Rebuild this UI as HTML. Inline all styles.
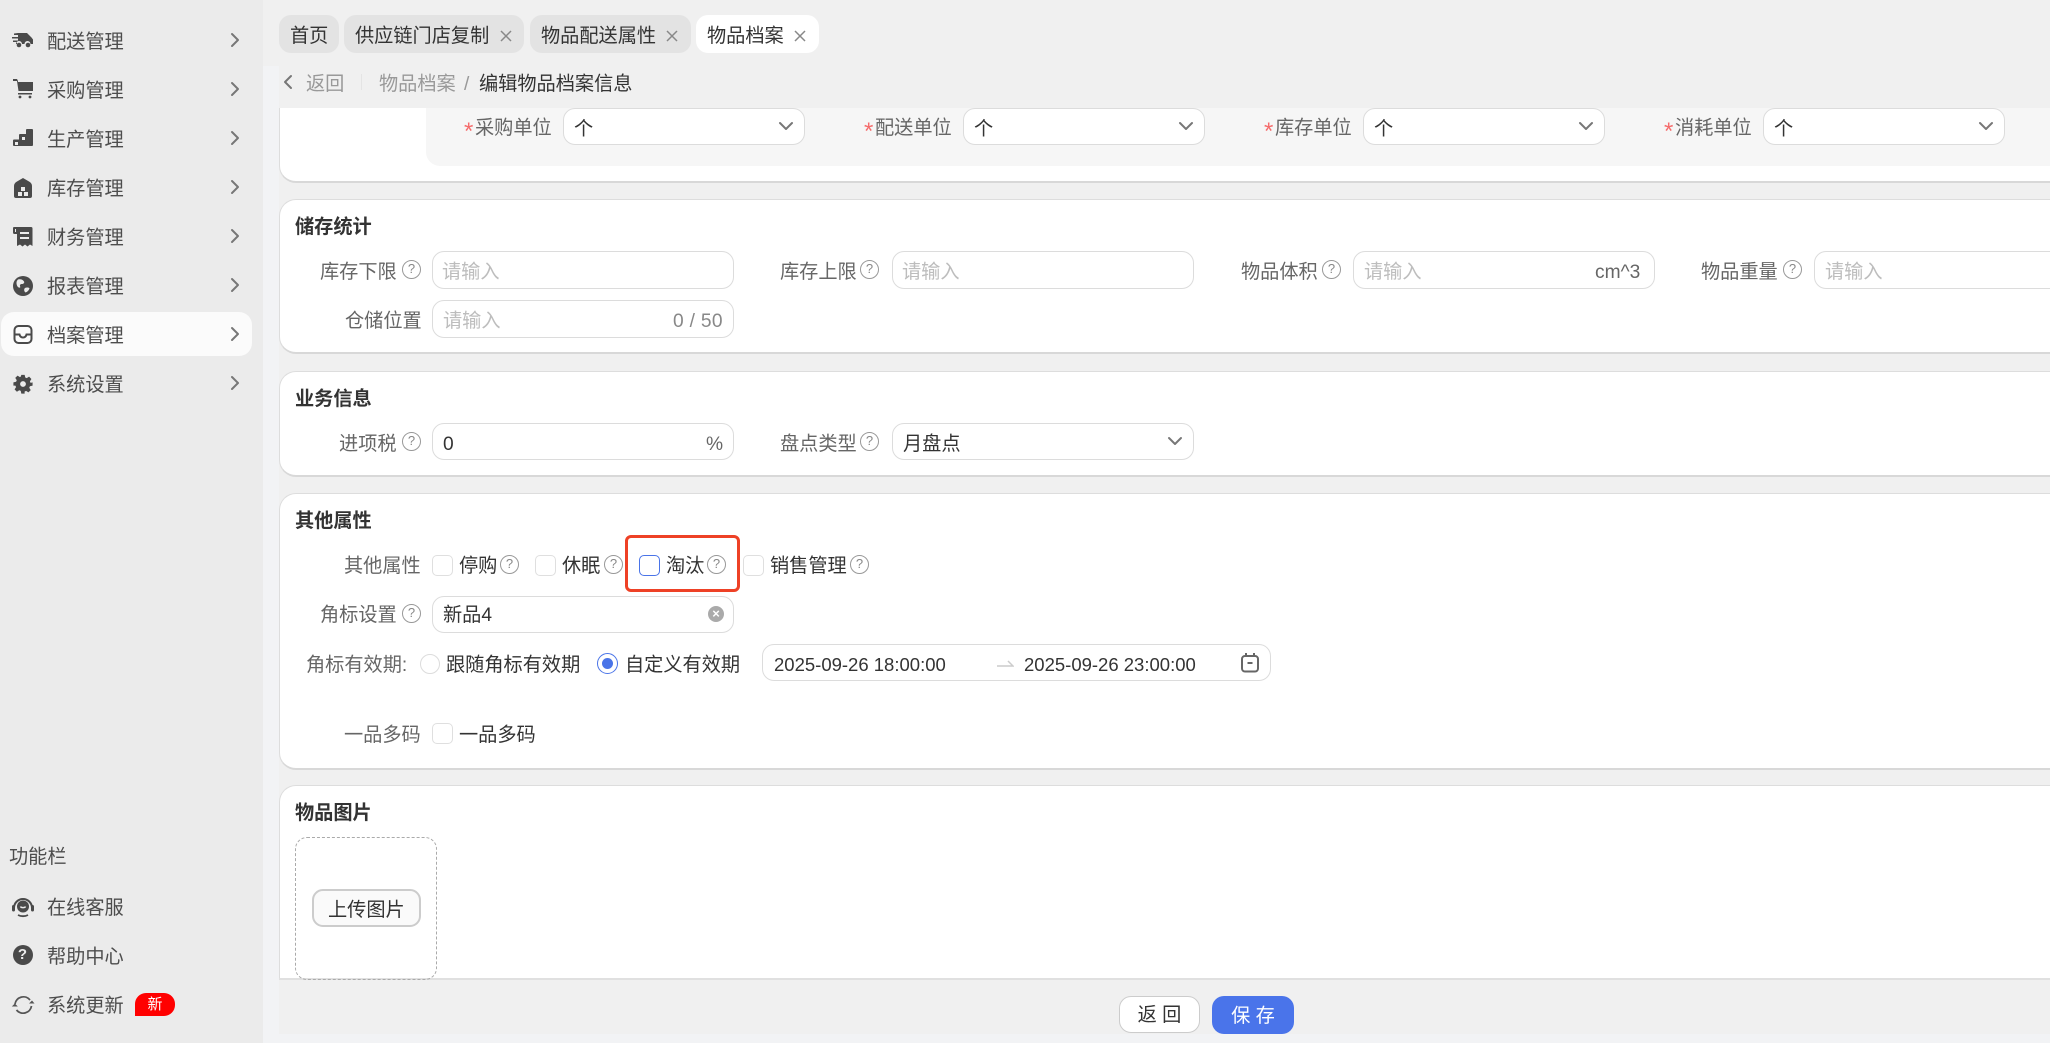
<!DOCTYPE html>
<html lang="zh-CN"><head><meta charset="utf-8"><title>物品档案</title>
<style>
html,body{margin:0;padding:0;width:2050px;height:1043px;overflow:hidden;background:#f2f3f5}
body{position:relative;font-family:"Liberation Sans","Noto Sans CJK SC",sans-serif;color:#333}
div,span,svg{position:absolute;box-sizing:border-box}
.t{white-space:nowrap;font-size:19.2px;line-height:26px;height:26px;color:#333;margin-top:2px}
.d{font-size:18.5px;margin-top:1px}
.g{color:#666}.m{color:#4d4d4d}.ph{color:#bdbdbd}
.b{font-weight:700;color:#333}
.star{font-size:24px;color:#f56c6c}
.card{left:279px;width:1900px;background:#fff;border:1px solid #ddd;border-bottom:2px solid #d8d8d8;border-radius:17px}
.in{background:#fff;border:1.5px solid #dcdcdc;border-radius:12px}
.cb{width:21px;height:21px;background:#fff;border:1.5px solid #dfdfdf;border-radius:5px}
.h{width:19px;height:19px;border:1.5px solid #999;border-radius:50%;color:#888;font-size:13px;line-height:16px;text-align:center}
.tab{top:15px;height:38px;background:#e3e3e3;border-radius:12px}
.st{fill:none;stroke:#777;stroke-width:2;stroke-linecap:round;stroke-linejoin:round}
</style></head><body>

<!-- backgrounds -->
<div style="left:0;top:0;width:263px;height:1043px;background:#ebebeb"></div>
<div style="left:263px;top:0;width:1787px;height:66px;background:#f0f0f0"></div>
<div style="left:279px;top:66px;width:1771px;height:968px;background:#f0f0f0"></div>

<!-- sidebar active -->
<div style="left:1px;top:312px;width:251px;height:44px;background:#fbfbfb;border-radius:13px"></div>

<!-- sidebar menu text -->
<span class="t m" style="left:47px;top:28px">配送管理</span>
<span class="t m" style="left:47px;top:77px">采购管理</span>
<span class="t m" style="left:47px;top:126px">生产管理</span>
<span class="t m" style="left:47px;top:175px">库存管理</span>
<span class="t m" style="left:47px;top:224px">财务管理</span>
<span class="t m" style="left:47px;top:273px">报表管理</span>
<span class="t m" style="left:47px;top:322px">档案管理</span>
<span class="t m" style="left:47px;top:371px">系统设置</span>

<!-- sidebar chevrons -->
<svg style="left:229px;top:32px" width="12" height="16" viewBox="0 0 12 16"><path class="st" d="M3 2l6 6-6 6"/></svg>
<svg style="left:229px;top:81px" width="12" height="16" viewBox="0 0 12 16"><path class="st" d="M3 2l6 6-6 6"/></svg>
<svg style="left:229px;top:130px" width="12" height="16" viewBox="0 0 12 16"><path class="st" d="M3 2l6 6-6 6"/></svg>
<svg style="left:229px;top:179px" width="12" height="16" viewBox="0 0 12 16"><path class="st" d="M3 2l6 6-6 6"/></svg>
<svg style="left:229px;top:228px" width="12" height="16" viewBox="0 0 12 16"><path class="st" d="M3 2l6 6-6 6"/></svg>
<svg style="left:229px;top:277px" width="12" height="16" viewBox="0 0 12 16"><path class="st" d="M3 2l6 6-6 6"/></svg>
<svg style="left:229px;top:326px" width="12" height="16" viewBox="0 0 12 16"><path class="st" d="M3 2l6 6-6 6"/></svg>
<svg style="left:229px;top:375px" width="12" height="16" viewBox="0 0 12 16"><path class="st" d="M3 2l6 6-6 6"/></svg>

<!-- sidebar icons -->
<svg style="left:12px;top:30px" width="22" height="20" viewBox="0 0 22 20" fill="#4a4a4a"><path d="M6 3h9l4.500 4.500 1.500 2V14h-2.500a3 3 0 0 0-6 0H10a3 3 0 0 0-6 0H5V12H1V10.500h5V8.500H0V7h6V5H2V3.500z"/><circle cx="7" cy="15" r="2.300"/><circle cx="16" cy="15" r="2.300"/></svg>
<svg style="left:12px;top:78px" width="22" height="22" viewBox="0 0 22 22" fill="#4a4a4a"><path d="M1 1h4l1 2v1h15v9H6.500L5 3H1z"/><path d="M6 15h14v1.500H6z"/><circle cx="8" cy="19" r="1.400"/><circle cx="18" cy="19" r="1.400"/></svg>
<svg style="left:12px;top:128px" width="22" height="20" viewBox="0 0 22 20" fill="#4a4a4a"><path d="M15 1h5a1 1 0 0 1 1 1v15a1 1 0 0 1-1 1H2a1 1 0 0 1-1-1v-4.500a1 1 0 0 1 1-1h5V7a1 1 0 0 1 1-1h6V2a1 1 0 0 1 1-1z"/><path d="M3 14h3v3H3zM10 9h3v3h-3z" fill="#ebebeb"/></svg>
<svg style="left:12px;top:177px" width="22" height="22" viewBox="0 0 22 22" fill="#4a4a4a"><path d="M11 1l6 3.500c2 1.200 3 2.500 3 4.500v10a2 2 0 0 1-2 2H4a2 2 0 0 1-2-2V9c0-2 1-3.300 3-4.500z"/><path d="M9 10h4v4H9zM6 15h4v4H6zM12 15h4v4h-4z" fill="#ebebeb"/></svg>
<svg style="left:12px;top:226px" width="22" height="22" viewBox="0 0 22 22" fill="#4a4a4a"><path d="M2 1h17a1.500 1.500 0 0 1 1.500 1.500V20l-2.500-1.500-2.500 2-2.500-2-2.500 2-2.500-2L5 20V8H2.500A1.500 1.500 0 0 1 1 6.500V2a1 1 0 0 1 1-1z"/><path d="M8 6h9v2H8zM8 11h9v2H8z" fill="#ebebeb"/><path d="M3 3v3h1V3z" fill="#ebebeb"/></svg>
<svg style="left:12px;top:275px" width="22" height="22" viewBox="0 0 22 22"><circle cx="11" cy="11" r="10" fill="#4a4a4a"/><path d="M6 4.500c3-.8 5 .4 6 2 .7 1.300-.4 2.500-2 2.500s-2.600 1-1.800 2.600c.5 1-1 1.500-2.200.4C4.500 10.500 3.600 6.500 6 4.500zM13 13c1.500-.8 3.500-.5 4.500.2-.5 2-2 3.500-4 4.300-1.500-1-1.800-3.500-.5-4.500z" fill="#ebebeb"/></svg>
<svg style="left:13px;top:324px" width="20" height="22" viewBox="0 0 20 22" fill="none" stroke="#4a4a4a" stroke-width="2"><rect x="1.500" y="2" width="17" height="17" rx="4"/><path d="M1.500 10.500h5c.5 2 1.800 3 3.500 3s3-1 3.500-3h5"/></svg>
<svg style="left:13px;top:374px" width="20" height="20" viewBox="0 0 24 24" fill="#4a4a4a"><path fill-rule="evenodd" d="M10 1h4l.7 3.200 1.800.8 2.800-1.800 2.800 2.800-1.800 2.800.8 1.800L23.500 10v4l-3.200.7-.8 1.800 1.800 2.800-2.800 2.800-2.800-1.800-1.800.8L14 23.500h-4l-.7-3.200-1.800-.8-2.800 1.800-2.800-2.800 1.800-2.800-.8-1.800L.5 14v-4l3.200-.7.8-1.800L2.700 4.700l2.800-2.800 2.800 1.800 1-.5zM12 8.500a3.500 3.500 0 1 0 0 7 3.500 3.500 0 0 0 0-7z"/></svg>

<!-- sidebar bottom -->
<span class="t m" style="left:9px;top:843px">功能栏</span>
<span class="t m" style="left:47px;top:894px">在线客服</span>
<span class="t m" style="left:47px;top:943px">帮助中心</span>
<span class="t m" style="left:47px;top:992px">系统更新</span>
<svg style="left:11px;top:896px" width="24" height="22" viewBox="0 0 24 22"><path d="M3 12a9 9 0 1 1 18 0" fill="none" stroke="#4a4a4a" stroke-width="2"/><circle cx="12" cy="10.500" r="6" fill="#4a4a4a"/><path d="M9.500 10.500c.6 1.500 4.400 1.500 5 0" fill="none" stroke="#ebebeb" stroke-width="1.500"/><rect x="1" y="9" width="3" height="6.500" rx="1.500" fill="#4a4a4a"/><rect x="20" y="9" width="3" height="6.500" rx="1.500" fill="#4a4a4a"/><path d="M7 19c3 1.600 7 1.600 10 0" fill="none" stroke="#4a4a4a" stroke-width="1.800"/></svg>
<div style="left:12.500px;top:945px;width:20px;height:20px;border-radius:50%;background:#4a4a4a;color:#ebebeb;font-size:15px;font-weight:700;line-height:20px;text-align:center">?</div>
<svg style="left:11px;top:994px" width="24" height="22" viewBox="0 0 24 22" fill="none" stroke="#555" stroke-width="1.800"><path d="M4 10a8.500 8.500 0 0 1 15-4"/><path d="M20.500 12a8.500 8.500 0 0 1-15 4"/><path d="M18 9.500l3-3 2.500 3" fill="#555" stroke="none"/><path d="M0.800 12.500l3-3 3 3" fill="#555" stroke="none"/></svg>
<div style="left:135px;top:993px;width:40px;height:23px;background:#f00;border-radius:11px 11px 11px 0;color:#fff;font-size:15px;line-height:23px;text-align:center">新</div>

<!-- tabs -->
<div class="tab" style="left:279px;width:60px"></div>
<div class="tab" style="left:344px;width:180px"></div>
<div class="tab" style="left:530px;width:161px"></div>
<div class="tab" style="left:696px;width:123px;background:#fff"></div>
<span class="t" style="left:290px;top:22px">首页</span>
<span class="t" style="left:355px;top:22px">供应链门店复制</span>
<span class="t" style="left:541px;top:22px">物品配送属性</span>
<span class="t" style="left:707px;top:22px">物品档案</span>
<svg style="left:500px;top:30px" width="12" height="12" viewBox="0 0 12 12"><path d="M1 1l10 10M11 1L1 11" stroke="#888" stroke-width="1.500"/></svg>
<svg style="left:666px;top:30px" width="12" height="12" viewBox="0 0 12 12"><path d="M1 1l10 10M11 1L1 11" stroke="#888" stroke-width="1.500"/></svg>
<svg style="left:794px;top:30px" width="12" height="12" viewBox="0 0 12 12"><path d="M1 1l10 10M11 1L1 11" stroke="#888" stroke-width="1.500"/></svg>

<!-- breadcrumb -->
<svg style="left:283px;top:74px" width="10" height="16" viewBox="0 0 10 16"><path class="st" d="M8 2L2 8l6 6"/></svg>
<span class="t" style="left:306px;top:70px;color:#999">返回</span>
<div style="left:361px;top:74px;width:1px;height:16px;background:#e4e4e4"></div>
<span class="t" style="left:379px;top:70px;color:#999">物品档案</span>
<span class="t" style="left:464px;top:70px;color:#999">/</span>
<span class="t" style="left:479px;top:70px">编辑物品档案信息</span>

<!-- content clip -->
<div style="left:0;top:108px;width:2050px;height:872px;overflow:hidden">
  <div class="card" style="top:-40px;height:115px"></div>
  <div style="left:426px;top:0;width:1624px;height:58px;background:#f6f6f6;border-radius:0 0 0 14px"></div>

  <div class="card" style="top:91px;height:155px"></div>
  <div class="card" style="top:263px;height:106px"></div>
  <div class="card" style="top:385px;height:277px"></div>
  <div class="card" style="top:677px;height:260px"></div>
  <div style="left:279px;top:870px;width:1771px;height:2px;background:#e0e0e0"></div>
</div>

<!-- unit row -->
<span class="t star" style="left:464px;top:117px">*</span><span class="t g" style="left:475px;top:114px">采购单位</span>
<span class="t star" style="left:864px;top:117px">*</span><span class="t g" style="left:875px;top:114px">配送单位</span>
<span class="t star" style="left:1264px;top:117px">*</span><span class="t g" style="left:1275px;top:114px">库存单位</span>
<span class="t star" style="left:1664px;top:117px">*</span><span class="t g" style="left:1675px;top:114px">消耗单位</span>
<div class="in" style="left:563px;top:108px;width:242px;height:37px"></div>
<div class="in" style="left:963px;top:108px;width:242px;height:37px"></div>
<div class="in" style="left:1363px;top:108px;width:242px;height:37px"></div>
<div class="in" style="left:1763px;top:108px;width:242px;height:37px"></div>
<span class="t" style="left:574px;top:115px">个</span>
<span class="t" style="left:974px;top:115px">个</span>
<span class="t" style="left:1374px;top:115px">个</span>
<span class="t" style="left:1774px;top:115px">个</span>
<svg style="left:777px;top:121px" width="18" height="12" viewBox="0 0 18 12"><path class="st" d="M3 2l6 6 6-6"/></svg>
<svg style="left:1177px;top:121px" width="18" height="12" viewBox="0 0 18 12"><path class="st" d="M3 2l6 6 6-6"/></svg>
<svg style="left:1577px;top:121px" width="18" height="12" viewBox="0 0 18 12"><path class="st" d="M3 2l6 6 6-6"/></svg>
<svg style="left:1977px;top:121px" width="18" height="12" viewBox="0 0 18 12"><path class="st" d="M3 2l6 6 6-6"/></svg>

<!-- 储存统计 -->
<span class="t b" style="left:295px;top:213px">储存统计</span>
<span class="t g" style="left:320px;top:258px">库存下限</span><div class="h" style="left:402px;top:260px">?</div>
<div class="in" style="left:432px;top:251px;width:302px;height:38px"></div><span class="t ph" style="left:442px;top:258px">请输入</span>
<span class="t g" style="left:780px;top:258px">库存上限</span><div class="h" style="left:860px;top:260px">?</div>
<div class="in" style="left:892px;top:251px;width:302px;height:38px"></div><span class="t ph" style="left:902px;top:258px">请输入</span>
<span class="t g" style="left:1241px;top:258px">物品体积</span><div class="h" style="left:1322px;top:260px">?</div>
<div class="in" style="left:1353px;top:251px;width:302px;height:38px"></div><span class="t ph" style="left:1364px;top:258px">请输入</span><span class="t g" style="left:1595px;top:258px">cm^3</span>
<span class="t g" style="left:1701px;top:258px">物品重量</span><div class="h" style="left:1783px;top:260px">?</div>
<div class="in" style="left:1814px;top:251px;width:302px;height:38px"></div><span class="t ph" style="left:1825px;top:258px">请输入</span>

<span class="t g" style="left:345px;top:307px">仓储位置</span>
<div class="in" style="left:432px;top:300px;width:302px;height:38px"></div><span class="t ph" style="left:443px;top:307px">请输入</span><span class="t" style="left:673px;top:307px;color:#888;letter-spacing:.3px">0 / 50</span>

<!-- 业务信息 -->
<span class="t b" style="left:295px;top:385px">业务信息</span>
<span class="t g" style="left:339px;top:430px">进项税</span><div class="h" style="left:402px;top:432px">?</div>
<div class="in" style="left:432px;top:423px;width:302px;height:37px"></div><span class="t" style="left:443px;top:430px">0</span><span class="t g" style="left:706px;top:430px">%</span>
<span class="t g" style="left:780px;top:430px">盘点类型</span><div class="h" style="left:860px;top:432px">?</div>
<div class="in" style="left:892px;top:423px;width:302px;height:37px"></div><span class="t" style="left:903px;top:430px">月盘点</span>
<svg style="left:1166px;top:436px" width="18" height="12" viewBox="0 0 18 12"><path class="st" d="M3 2l6 6 6-6"/></svg>

<!-- 其他属性 -->
<span class="t b" style="left:295px;top:507px">其他属性</span>
<span class="t g" style="left:344px;top:552px">其他属性</span>
<div class="cb" style="left:432px;top:555px"></div><span class="t" style="left:459px;top:552px">停购</span><div class="h" style="left:500px;top:555px">?</div>
<div class="cb" style="left:535px;top:555px"></div><span class="t" style="left:562px;top:552px">休眠</span><div class="h" style="left:604px;top:555px">?</div>
<div style="left:625px;top:535px;width:115px;height:57px;border:3px solid #ee4126;border-radius:6px"></div>
<div class="cb" style="left:639px;top:555px;border-color:#4a74e8"></div><span class="t" style="left:666px;top:552px">淘汰</span><div class="h" style="left:707px;top:555px">?</div>
<div class="cb" style="left:743px;top:555px"></div><span class="t" style="left:770px;top:552px">销售管理</span><div class="h" style="left:850px;top:555px">?</div>

<span class="t g" style="left:320px;top:601px">角标设置</span><div class="h" style="left:402px;top:604px">?</div>
<div class="in" style="left:432px;top:596px;width:302px;height:37px"></div><span class="t" style="left:443px;top:601px">新品4</span>
<div style="left:708px;top:606px;width:16px;height:16px;border-radius:50%;background:#aaa;color:#fff;font-size:13px;font-weight:700;line-height:15px;text-align:center">×</div>

<span class="t g" style="left:306px;top:651px">角标有效期:</span>
<div style="left:420px;top:654px;width:20px;height:20px;border-radius:50%;border:1.5px solid #dcdcdc;background:#fff"></div>
<span class="t" style="left:446px;top:651px">跟随角标有效期</span>
<div style="left:597px;top:653px;width:21px;height:21px;border-radius:50%;border:1.5px solid #4a74e8;background:#fff"></div>
<div style="left:602px;top:658px;width:11px;height:11px;border-radius:50%;background:#4a74e8"></div>
<span class="t" style="left:625px;top:651px">自定义有效期</span>

<div class="in" style="left:762px;top:644px;width:509px;height:37px"></div>
<span class="t d" style="left:774px;top:651px">2025-09-26 18:00:00</span>
<svg style="left:996px;top:658px" width="18" height="10" viewBox="0 0 18 10"><path d="M1 8h16L12 3" fill="none" stroke="#ccc" stroke-width="1.500"/></svg>
<span class="t d" style="left:1024px;top:651px">2025-09-26 23:00:00</span>
<svg style="left:1240px;top:652px" width="20" height="22" viewBox="0 0 20 22" fill="none" stroke="#666" stroke-width="2"><rect x="2" y="4" width="16" height="15.500" rx="3"/><path d="M6 1v4M14 1v4M7.500 11h5"/></svg>

<span class="t g" style="left:344px;top:721px">一品多码</span>
<div class="cb" style="left:432px;top:723px"></div><span class="t" style="left:459px;top:721px">一品多码</span>

<!-- 物品图片 -->
<span class="t b" style="left:295px;top:799px">物品图片</span>
<div style="left:295px;top:837px;width:142px;height:143px;border:1px dashed #aaa;border-radius:12px"></div>
<div style="left:312px;top:889px;width:109px;height:38px;background:#fafafa;border:2px solid #ccc;border-radius:11px"></div>
<span class="t" style="left:328px;top:896px">上传图片</span>

<!-- footer -->
<div style="left:1119px;top:996px;width:81px;height:37px;background:#fff;border:1.5px solid #ccc;border-radius:12px;font-size:19.2px;line-height:38px;text-align:center;color:#333">返 回</div>
<div style="left:1212px;top:996px;width:82px;height:38px;background:#4a74ea;border-radius:12px;font-size:19.2px;line-height:41px;text-align:center;color:#fff">保 存</div>

</body></html>
